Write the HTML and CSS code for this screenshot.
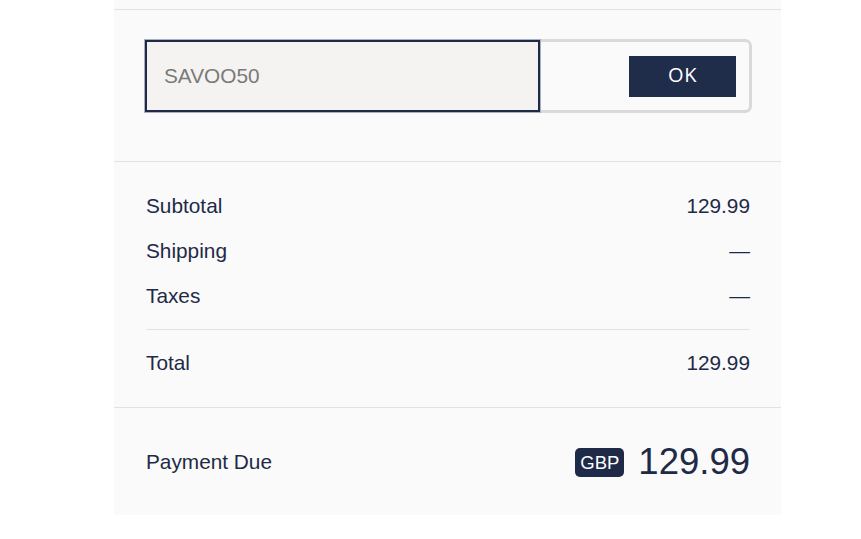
FILE: index.html
```html
<!DOCTYPE html>
<html>
<head>
<meta charset="utf-8">
<link rel="stylesheet" href="styles.css">
</head>
<body>
<div class="panel">
  <div class="section discount">
    <div class="field">
      <div class="code-input">SAVOO50</div>
      <div class="btn">OK</div>
    </div>
  </div>
  <div class="section lines">
    <div class="row"><span>Subtotal</span><span>129.99</span></div>
    <div class="row"><span>Shipping</span><span>—</span></div>
    <div class="row"><span>Taxes</span><span>—</span></div>
    <div class="divider"></div>
    <div class="row"><span>Total</span><span>129.99</span></div>
  </div>
  <div class="section due">
    <span class="due-label">Payment Due</span>
    <span class="due-value"><span class="cur">GBP</span><span class="amount">129.99</span></span>
  </div>
</div>
</body>
</html>
```
FILE: styles.css
```css
html, body {
  margin: 0;
  padding: 0;
  background: #ffffff;
}
body {
  font-family: "Liberation Sans", Arial, sans-serif;
  color: #1e2a47;
}
.panel {
  margin-left: 114px;
  width: 667px;
  height: 515px;
  background: #fafafa;
  padding-top: 9px;
  box-sizing: border-box;
}
.section {
  border-top: 1px solid #e1e1e1;
  padding-left: 31px;
  padding-right: 31px;
}
.discount {
  padding-top: 29px;
  padding-bottom: 48px;
}
.field {
  height: 74px;
  width: 607px;
  box-sizing: border-box;
  border: 3px solid #d9d9d9;
  border-radius: 7px;
  display: flex;
  align-items: center;
  justify-content: space-between;
}
.code-input {
  align-self: stretch;
  margin: -2px 0 -2px -3px;
  width: 395px;
  box-sizing: border-box;
  border: 2px solid #1e2a47;
  box-shadow: 0 0 0 1px #a9afbb;
  background: #f4f3f1;
  color: #7a7a7a;
  font-size: 20.8px;
  display: flex;
  align-items: center;
  padding-left: 17px;
}
.btn {
  width: 107px;
  height: 41px;
  margin-right: 13px;
  background: #1f2d4a;
  color: #ffffff;
  font-family: "Open Sans", sans-serif;
  font-size: 20px;
  display: flex;
  align-items: center;
  justify-content: center;
  letter-spacing: 0.5px;
  padding-bottom: 3px;
  box-sizing: border-box;
}
.lines {
  padding-top: 21px;
  padding-bottom: 22px;
  padding-left: 32px;
}
.row {
  height: 45px;
  display: flex;
  align-items: center;
  justify-content: space-between;
  font-size: 20.8px;
}
.divider {
  height: 1px;
  background: #e1e1e1;
  margin: 11px 0 10px;
}
.due {
  height: 107px;
  padding-left: 32px;
  padding-top: 2px;
  display: flex;
  align-items: center;
  justify-content: space-between;
  box-sizing: border-box;
}
.due-label {
  font-size: 20.8px;
}
.due-value {
  display: flex;
  align-items: center;
}
.cur {
  background: #1e2a47;
  color: #ffffff;
  font-size: 18.5px;
  border-radius: 5px;
  padding: 4px 5px 3px;
  line-height: 22px;
  margin-right: 14px;
  margin-top: 1px;
}
.amount {
  font-size: 36.5px;
  line-height: 40px;
}
```
